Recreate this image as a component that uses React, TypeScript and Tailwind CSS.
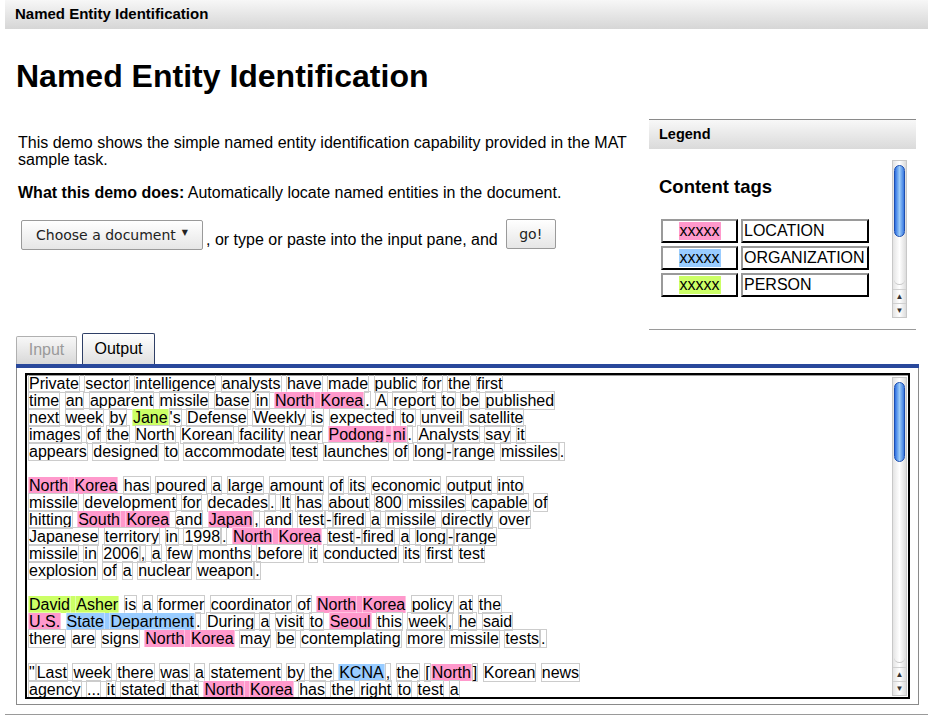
// Named Entity Identification demo page (MAT sample task).
// Output pane shows tokenised text; entity spans get a tag colour.

type Tag = "L" | "O" | "P";
type Part = string | [Tag, string];

const tagBg: Record<Tag, string> = {
  L: "bg-[#ff99cc]",
  O: "bg-[#99ccff]",
  P: "bg-[#ccff66]",
};

const legend: { tag: Tag; label: string }[] = [
  { tag: "L", label: "LOCATION" },
  { tag: "O", label: "ORGANIZATION" },
  { tag: "P", label: "PERSON" },
];

const doc: Part[][] = [
  ["Private sector intelligence analysts have made public for the first"],
  ["time an apparent missile base in ", ["L", "North Korea"], ". A report to be published"],
  ["next week by ", ["P", "Jane"], "'s Defense Weekly is expected to unveil satellite"],
  ["images of the North Korean facility near ", ["L", "Podong-ni"], ". Analysts say it"],
  ["appears designed to accommodate test launches of long-range missiles."],
  [],
  [["L", "North Korea"], " has poured a large amount of its economic output into"],
  ["missile development for decades. It has about 800 missiles capable of"],
  ["hitting ", ["L", "South Korea"], " and ", ["L", "Japan"], ", and test-fired a missile directly over"],
  ["Japanese territory in 1998. ", ["L", "North Korea"], " test-fired a long-range"],
  ["missile in 2006, a few months before it conducted its first test"],
  ["explosion of a nuclear weapon."],
  [],
  [["P", "David Asher"], " is a former coordinator of ", ["L", "North Korea"], " policy at the"],
  [["L", "U.S."], " ", ["O", "State Department"], ". During a visit to ", ["L", "Seoul"], " this week, he said"],
  ["there are signs ", ["L", "North Korea"], " may be contemplating more missile tests."],
  [],
  ['"Last week there was a statement by the ', ["O", "KCNA"], ", the [", ["L", "North"], "] Korean news"],
  ["agency ... it stated that ", ["L", "North Korea"], " has the right to test a"],
];

const TOKEN_RE = /\.\.\.|(?:[A-Z]\.){2,}|'s|[A-Za-z0-9]+|[^\sA-Za-z0-9]/g;

function Tokens({ text, tagged }: { text: string; tagged: boolean }) {
  const pieces = text.split(/( +)/).filter((p) => p !== "");
  return (
    <>
      {pieces.map((p, i) =>
        /^ +$/.test(p) ? (
          <span key={i}>{p}</span>
        ) : (
          (p.match(TOKEN_RE) ?? []).map((t, j) => (
            <span
              key={`${i}-${j}`}
              className={tagged ? "border border-white/40" : "border border-[#cccccc]"}
            >
              {t}
            </span>
          ))
        )
      )}
    </>
  );
}

function DocLine({ parts }: { parts: Part[] }) {
  if (parts.length === 0) return <div className="h-[17px]" />;
  return (
    <div className="whitespace-pre h-[17px]">
      {parts.map((part, i) =>
        typeof part === "string" ? (
          <Tokens key={i} text={part} tagged={false} />
        ) : (
          <span key={i} className={tagBg[part[0]]}>
            <Tokens text={part[1]} tagged />
          </span>
        )
      )}
    </div>
  );
}

function Scrollbar({ height, thumbHeight }: { height: number; thumbHeight: number }) {
  return (
    <div
      className="w-[15px] shrink-0 flex flex-col border border-[#c8c8c8] bg-gradient-to-r from-[#e4e4e4] via-white to-[#dcdcdc]"
      style={{ height }}
    >
      <div
        className="mt-[4px] mx-px rounded-full border border-[#1d4fb0] bg-gradient-to-r from-[#2d6de0] via-[#9cccf8] to-[#3a78e0]"
        style={{ height: thumbHeight }}
      />
      <div className="flex-1" />
      <div className="mx-[1px] mb-[4px] h-[10px] rounded-b-full border-b border-[#c8c8c8]" />
      <div className="h-[14px] flex items-center justify-center text-[8px] leading-none text-[#333] border-t border-[#d0d0d0]">
        ▲
      </div>
      <div className="h-[14px] flex items-center justify-center text-[8px] leading-none text-[#333] border-t border-[#d0d0d0]">
        ▼
      </div>
    </div>
  );
}

export default function App() {
  return (
    <div className="w-[933px] h-[725px] overflow-hidden bg-white text-black font-['Liberation_Sans',Arial,sans-serif]">
      <div className="mx-[5px] h-[29px] flex items-center pl-[10px] bg-gradient-to-b from-[#f7f7f7] to-[#d6d6d6] text-[15px] font-bold">
        Named Entity Identification
      </div>

      <h1 className="mt-[29px] ml-[16px] text-[32px] leading-[36px] font-bold">
        Named Entity Identification
      </h1>

      <div className="flex items-start pl-[16px] pr-[17px]">
        <div className="flex-1 mt-[40px] pl-[2px] text-[16px] leading-[17px]">
          <p>
            This demo shows the simple named entity identification capability provided in the MAT
            sample task.
          </p>
          <p className="mt-[16px]">
            <b>What this demo does:</b> Automatically locate named entities in the document.
          </p>
          <div className="mt-[18px] flex items-end">
            <button className="ml-[3px] h-[30px] w-[182px] rounded-[2px] border border-[#9a9a9a] bg-gradient-to-b from-white to-[#e6e6e6] font-['DejaVu_Sans',sans-serif] text-[14px] text-[#222] flex items-center justify-center gap-[6px]">
              Choose a document
              <span className="text-[8px] leading-none -mt-[4px]">▼</span>
            </button>
            <span className="ml-[3px] mb-[2px]">, or type or paste into the input pane, and</span>
            <button className="ml-[8px] mb-[1px] h-[30px] w-[50px] rounded-[2px] border border-[#9a9a9a] bg-gradient-to-b from-white to-[#e6e6e6] font-['DejaVu_Sans',sans-serif] text-[14px] text-[#222]">
              go!
            </button>
          </div>
        </div>

        <div className="w-[267px] mt-[25px] border-t border-[#8a8a8a]">
          <div className="h-[29px] flex items-center pl-[10px] bg-gradient-to-b from-[#f8f8f8] to-[#dadada] text-[14.5px] font-bold">
            Legend
          </div>
          <div className="flex h-[181px] border-b border-[#9a9a9a]">
            <div className="flex-1 pl-[10px]">
              <h2 className="mt-[27px] text-[18.5px] leading-[22px] font-bold">Content tags</h2>
              <div className="mt-[21px] ml-[2px] flex flex-col gap-[3px] text-[16px]">
                {legend.map((row) => (
                  <div key={row.tag} className="flex gap-[3px]">
                    <div className="w-[77px] h-[24px] flex items-center justify-center border-2 border-t-[#9a9a9a] border-l-[#9a9a9a] border-b-black border-r-black">
                      <span className={`${tagBg[row.tag]} px-[1px] leading-[18px]`}>xxxxx</span>
                    </div>
                    <div className="w-[128px] h-[24px] flex items-center pl-[1px] border-2 border-t-[#9a9a9a] border-l-[#9a9a9a] border-b-black border-r-black">
                      {row.label}
                    </div>
                  </div>
                ))}
              </div>
            </div>
            <div className="mt-[11px] mr-[9px]">
              <Scrollbar height={158} thumbHeight={72} />
            </div>
          </div>
        </div>
      </div>

      <div className="mt-[3px] ml-[16px] mr-[14px]">
        <div className="flex items-end gap-[5px] text-[16px] h-[31px]">
          <div className="w-[61px] h-[28px] flex items-center justify-center pb-[2px] rounded-t-[2px] border border-b-0 border-[#b0b0b0] bg-gradient-to-b from-[#f8f8f8] to-[#d8d8d8] text-[#9a9a9a]">
            Input
          </div>
          <div className="w-[73px] h-[31px] flex items-center justify-center pb-[1px] rounded-t-[2px] border border-b-0 border-[#2f3f66] bg-gradient-to-b from-white to-[#e0e0e0]">
            Output
          </div>
        </div>
        <div className="h-[4px] bg-[#29489b]" />
        <div className="h-[337px] border border-t-0 border-[#8a8a8a] pt-[5px] pl-[8px] pr-[8px]">
          <div className="h-[326px] flex border-2 border-black shadow-[inset_0_1px_0_#9a9a9a]">
            <div className="flex-1 overflow-hidden pl-px text-[16px] leading-[17px]">
              {doc.map((parts, i) => (
                <DocLine key={i} parts={parts} />
              ))}
            </div>
            <div className="mt-[2px] mr-px">
              <Scrollbar height={319} thumbHeight={80} />
            </div>
          </div>
        </div>
      </div>

      <div className="mt-[9px] mx-[5px] border-t border-[#9a9a9a]" />
    </div>
  );
}
